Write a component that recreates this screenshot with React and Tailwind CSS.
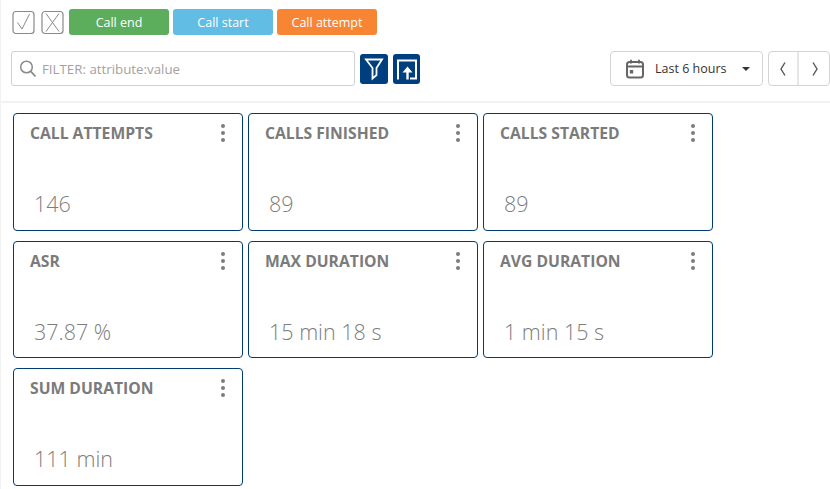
import React from 'react';

const font = { fontFamily: '"Open Sans", "Noto Sans", sans-serif' };

const cards = [
  { title: 'CALL ATTEMPTS', value: '146' },
  { title: 'CALLS FINISHED', value: '89' },
  { title: 'CALLS STARTED', value: '89' },
  { title: 'ASR', value: '37.87 %' },
  { title: 'MAX DURATION', value: '15 min 18 s' },
  { title: 'AVG DURATION', value: '1 min 15 s' },
  { title: 'SUM DURATION', value: '111 min' },
];

const Card = ({ title, value }) => (
  <div className="relative h-[117.5px] w-[230px] rounded-[4px] border border-[#003b73] bg-white">
    <div className="absolute left-[16px] top-[8px] text-[15.7px] font-bold leading-[22px] text-[#7b7b7b]">{title}</div>
    <div className="absolute right-[17px] top-[10px] flex flex-col gap-[3px]">
      <span className="h-[4px] w-[4px] rounded-full bg-[#7d7d7d]" />
      <span className="h-[4px] w-[4px] rounded-full bg-[#7d7d7d]" />
      <span className="h-[4px] w-[4px] rounded-full bg-[#7d7d7d]" />
    </div>
    <div className="absolute left-[20px] top-[74px] text-[21.5px] font-light leading-[32px] text-[#7d7d7d]">{value}</div>
  </div>
);

const App = () => {
  return (
    <div className="h-[489px] w-[830px] overflow-hidden border-l border-[#f2f2f2] bg-white" style={font}>
      <div className="h-[103px] border-b-2 border-[#f2f2f2]">
        <div className="flex items-center pl-[11px] pt-[9px]">
          <svg width="24" height="24" viewBox="0 0 24 24" fill="none" className="block">
            <rect x="1" y="1.5" width="21" height="22" rx="3" stroke="#8a8a8a" strokeWidth="1.2" />
            <path d="M5.5 12.5 L10 19 L17.5 4" stroke="#8a8a8a" strokeWidth="1" />
          </svg>
          <svg width="24" height="24" viewBox="0 0 24 24" fill="none" className="ml-[5px] block">
            <rect x="1" y="1.5" width="21" height="22" rx="3" stroke="#8a8a8a" strokeWidth="1.2" />
            <path d="M5 3.5 L18 21.5 M18 3.5 L5 21.5" stroke="#8a8a8a" strokeWidth="1" />
          </svg>
          <button className="ml-[4px] h-[26px] w-[100px] rounded-[3px] bg-[#5cad5c] pt-[2px] text-[12.5px] text-white">Call end</button>
          <button className="ml-[4px] h-[26px] w-[100px] rounded-[3px] bg-[#62bde4] pt-[2px] text-[12.5px] text-white">Call start</button>
          <button className="ml-[4px] h-[26px] w-[100px] rounded-[3px] bg-[#f78533] pt-[2px] text-[12.5px] text-white">Call attempt</button>
        </div>
        <div className="flex items-start pl-[10px] pr-0 pt-[16px]">
          <div className="flex h-[35px] w-[344px] items-center rounded-[3px] border border-[#cfcfd4] bg-white pl-[7px]">
            <svg width="18" height="20" viewBox="0 0 18 20" fill="none">
              <circle cx="7.5" cy="8" r="5.8" stroke="#8a8a8a" strokeWidth="1.5" />
              <path d="M11.8 12.4 L16.5 17.5" stroke="#8a8a8a" strokeWidth="1.8" />
            </svg>
            <span className="ml-[5px] pt-[2px] text-[13.3px] text-[#a2a2a2]">FILTER: attribute:value</span>
          </div>
          <div className="ml-[5px] mt-[3px] h-[30px] w-[28px] rounded-[3px] bg-[#003f7f]">
            <svg width="28" height="30" viewBox="0 0 28 30" fill="none" className="block">
              <path d="M6 5.5 H22 L16.5 14 V21 L12.5 24.5 V14 Z" stroke="#ffffff" strokeWidth="1.8" />
            </svg>
          </div>
          <div className="ml-[5px] mt-[3px] h-[30px] w-[27px] rounded-[3px] bg-[#003f7f]">
            <svg width="27" height="30" viewBox="0 0 27 30" fill="none" className="block">
              <path d="M5 25.5 V6.5 H23 V24.5 H17" stroke="#ffffff" strokeWidth="2" />
              <path d="M14.5 25.5 V17" stroke="#ffffff" strokeWidth="2.4" />
              <path d="M9.5 18.5 L14.5 12.5 L19.5 18.5 Z" fill="#ffffff" />
            </svg>
          </div>
          <div className="ml-auto flex h-[35px] w-[153px] items-center rounded-[4px] border border-[#d4d4d4] pl-[15px]">
            <svg width="18" height="20" viewBox="0 0 18 20" fill="none">
              <rect x="1" y="3" width="16" height="15.5" rx="2.5" stroke="#666666" strokeWidth="2" />
              <path d="M1 7.5 H17 M5 0.8 V4.5 M13 0.8 V4.5" stroke="#666666" strokeWidth="1.8" />
              <rect x="3.8" y="11" width="3.4" height="3.4" rx="0.5" fill="#666666" />
            </svg>
            <span className="ml-[11px] pt-[2px] text-[12.5px] text-[#333333]">Last 6 hours</span>
            <span className="ml-[16px] h-0 w-0 border-x-[4px] border-t-[4px] border-x-transparent border-t-[#333333]" />
          </div>
          <div className="ml-[5px] flex h-[35px] w-[62px] rounded-[4px] border border-[#d4d4d4]">
            <div className="flex w-[30px] items-center justify-center border-r-2 border-[#e6e6e6]">
              <svg width="8" height="16" viewBox="0 0 8 16" fill="none">
                <path d="M6 1.5 L2 8 L6 14.5" stroke="#555555" strokeWidth="1.4" />
              </svg>
            </div>
            <div className="flex flex-1 items-center justify-center pl-[1px]">
              <svg width="8" height="16" viewBox="0 0 8 16" fill="none">
                <path d="M2 1.5 L6 8 L2 14.5" stroke="#555555" strokeWidth="1.4" />
              </svg>
            </div>
          </div>
        </div>
      </div>
      <div className="flex w-[729px] flex-wrap gap-x-[5px] gap-y-[10px] pl-[12px] pt-[10px]">
        {cards.map((card) => (
          <Card key={card.title} title={card.title} value={card.value} />
        ))}
      </div>
    </div>
  );
};

export default App;
